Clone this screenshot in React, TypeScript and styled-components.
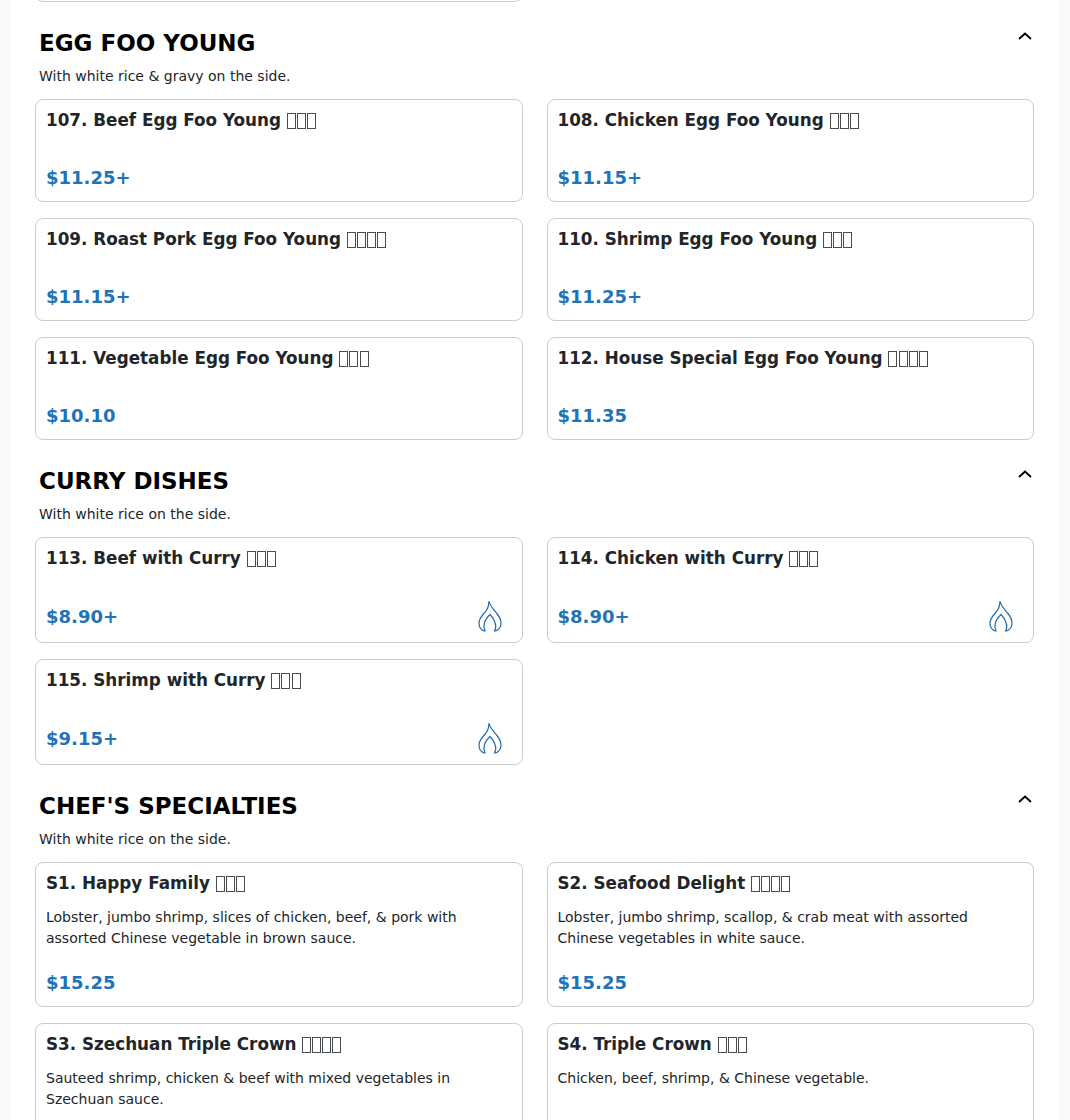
import styled, { createGlobalStyle } from 'styled-components';

const GlobalStyle = createGlobalStyle`
  html, body {
    margin: 0;
    height: 100%;
    overflow: hidden;
    background: #f9f9f9;
    font-family: "DejaVu Sans", sans-serif;
    color: #212529;
  }
`;

const Page = styled.main`
  width: 1048px;
  margin: -101px auto 0;
  padding: 0 25px 0 24px;
  box-sizing: border-box;
  background: #fff;
`;

const Section = styled.section`
  padding-top: 16px;
`;

const Header = styled.header`
  position: relative;
  padding: 12px 4px 0;
  margin-bottom: 12px;
`;

const Heading = styled.h2`
  margin: 0;
  font-size: 23px;
  line-height: 27px;
  font-weight: 700;
  color: #000;
`;

const Note = styled.p`
  margin: 8px 0 0;
  font-size: 14px;
  line-height: 22px;
  color: #212529;
`;

const Toggle = styled.button`
  position: absolute;
  top: 9px;
  right: 0;
  width: 18px;
  height: 18px;
  padding: 0;
  border: 0;
  background: none;
  color: #000;
  display: flex;
`;

const Grid = styled.div`
  display: grid;
  grid-template-columns: 1fr 1fr;
  gap: 16px 24px;
`;

const Card = styled.article<{ $tall?: boolean }>`
  box-sizing: border-box;
  display: flex;
  flex-direction: column;
  padding: 10px;
  min-height: ${(p) => (p.$tall ? 106 : 103)}px;
  border: 1px solid #ccc;
  border-radius: 8px;
  background: #fff;
`;

const Title = styled.h3`
  margin: 0;
  font-size: 16.8px;
  line-height: 21px;
  font-weight: 700;
  color: #212529;
`;

// the dish names in the picture show as missing-glyph boxes
const Tofu = styled.span`
  display: inline-block;
  box-sizing: border-box;
  width: 9px;
  height: 16px;
  margin-right: 1.1px;
  border: 1px solid #4a4d50;
  vertical-align: -3px;
`;

const Desc = styled.p`
  margin: 12.5px 0 0;
  font-size: 14px;
  line-height: 21px;
  color: #212529;
`;

const Footer = styled.div`
  display: flex;
  align-items: center;
  justify-content: space-between;
  margin-top: auto;
  padding-top: 20.5px;
`;

const Price = styled.span`
  font-size: 18px;
  line-height: 27px;
  font-weight: 700;
  color: #1f73b7;
`;

const FlameIcon = styled.svg`
  width: 32px;
  height: 32px;
  margin-right: 6px;
  fill: none;
  stroke: #1f6aa8;
  stroke-width: 1.200;
`;

const Flame = () => (
  <FlameIcon viewBox="0 0 32 32">
    <path d="M15 1C15.800 6 19.500 9 22.500 13C25.500 16.500 27 19.500 27 23C27 26.500 25 29.800 21.500 31H20.500C21.800 28.500 22.200 25.500 21 22.500C20 19 18 16.500 16 14.500C14 16.500 11.500 19 10.500 22.500C9.500 25.500 10 28.500 11 31H10C6.800 29.800 5 26.500 5 23C5 18.800 8 15.500 10.800 12.500C13.500 9.500 15 5.800 15 1Z" />
  </FlameIcon>
);

const Chevron = () => (
  <svg width="18" height="18" viewBox="0 0 18 18" fill="none" stroke="currentColor" strokeWidth="1.800">
    <path d="M3 12L9 6.500l6 5.500" />
  </svg>
);

type Dish = { title: string; boxes: number; price: string; desc?: string; spicy?: boolean };
type Group = { name: string; note: string; dishes: Dish[] };

const groups: Group[] = [
  {
    name: 'EGG FOO YOUNG',
    note: 'With white rice & gravy on the side.',
    dishes: [
      { title: '107. Beef Egg Foo Young', boxes: 3, price: '$11.25+' },
      { title: '108. Chicken Egg Foo Young', boxes: 3, price: '$11.15+' },
      { title: '109. Roast Pork Egg Foo Young', boxes: 4, price: '$11.15+' },
      { title: '110. Shrimp Egg Foo Young', boxes: 3, price: '$11.25+' },
      { title: '111. Vegetable Egg Foo Young', boxes: 3, price: '$10.10' },
      { title: '112. House Special Egg Foo Young', boxes: 4, price: '$11.35' },
    ],
  },
  {
    name: 'CURRY DISHES',
    note: 'With white rice on the side.',
    dishes: [
      { title: '113. Beef with Curry', boxes: 3, price: '$8.90+', spicy: true },
      { title: '114. Chicken with Curry', boxes: 3, price: '$8.90+', spicy: true },
      { title: '115. Shrimp with Curry', boxes: 3, price: '$9.15+', spicy: true },
    ],
  },
  {
    name: "CHEF'S SPECIALTIES",
    note: 'With white rice on the side.',
    dishes: [
      {
        title: 'S1. Happy Family',
        boxes: 3,
        price: '$15.25',
        desc: 'Lobster, jumbo shrimp, slices of chicken, beef, & pork with assorted Chinese vegetable in brown sauce.',
      },
      {
        title: 'S2. Seafood Delight',
        boxes: 4,
        price: '$15.25',
        desc: 'Lobster, jumbo shrimp, scallop, & crab meat with assorted Chinese vegetables in white sauce.',
      },
      {
        title: 'S3. Szechuan Triple Crown',
        boxes: 4,
        price: '$15.25',
        desc: 'Sauteed shrimp, chicken & beef with mixed vegetables in Szechuan sauce.',
      },
      {
        title: 'S4. Triple Crown',
        boxes: 3,
        price: '$15.25',
        desc: 'Chicken, beef, shrimp, & Chinese vegetable.',
      },
    ],
  },
];

const App = () => (
  <>
    <GlobalStyle />
    <Page>
      <Grid>
        <Card />
      </Grid>
      {groups.map((group) => (
        <Section key={group.name}>
          <Header>
            <Heading>{group.name}</Heading>
            <Note>{group.note}</Note>
            <Toggle aria-label="Collapse">
              <Chevron />
            </Toggle>
          </Header>
          <Grid>
            {group.dishes.map((dish) => (
              <Card key={dish.title} $tall={dish.spicy}>
                <Title>
                  {dish.title}{' '}
                  {Array.from({ length: dish.boxes }, (_, i) => (
                    <Tofu key={i} />
                  ))}
                </Title>
                {dish.desc && <Desc>{dish.desc}</Desc>}
                <Footer>
                  <Price>{dish.price}</Price>
                  {dish.spicy && <Flame />}
                </Footer>
              </Card>
            ))}
          </Grid>
        </Section>
      ))}
    </Page>
  </>
);

export default App;
